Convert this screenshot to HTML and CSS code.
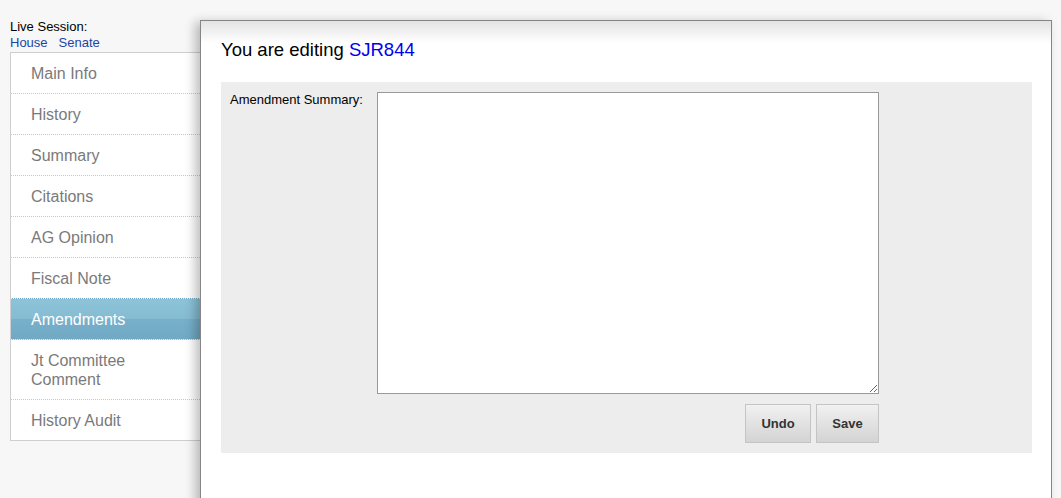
FILE: index.html
```html
<!DOCTYPE html>
<html>
<head>
<meta charset="utf-8">
<link rel="stylesheet" href="styles.css">
</head>
<body>
<div class="layout">
  <aside class="sidebar">
    <div class="session">
      <div>Live Session:</div>
      <div class="session-links"><a href="#">House</a><a href="#">Senate</a></div>
    </div>
    <ul class="nav">
      <li>Main Info</li>
      <li>History</li>
      <li>Summary</li>
      <li>Citations</li>
      <li>AG Opinion</li>
      <li>Fiscal Note</li>
      <li class="active">Amendments</li>
      <li>Jt Committee<br>Comment</li>
      <li class="last">History Audit</li>
    </ul>
  </aside>
  <main class="panel">
    <h1 class="title">You are editing <span class="bill">SJR844</span></h1>
    <form class="editor">
      <label class="field-label" for="summary">Amendment Summary:</label>
      <div class="field">
        <textarea id="summary" class="summary"></textarea>
        <div class="actions">
          <button type="button" class="btn btn-undo">Undo</button>
          <button type="button" class="btn btn-save">Save</button>
        </div>
      </div>
    </form>
  </main>
</div>
</body>
</html>
```
FILE: styles.css
```css
html, body {
  margin: 0;
  padding: 0;
  background: #f7f7f7;
  font-family: "Liberation Sans", Arial, Helvetica, sans-serif;
  overflow: hidden;
  height: 498px;
}

.layout {
  display: flex;
  align-items: flex-start;
}

.sidebar {
  width: 190px;
  padding-left: 10px;
  padding-top: 19px;
  flex: none;
}

.session {
  font-size: 13px;
  line-height: 16px;
  color: #000;
  height: 33px;
}

.session-links {
  display: flex;
  gap: 11px;
}

.session-links a {
  color: #1d44a6;
  text-decoration: none;
}

.nav {
  list-style: none;
  margin: 0;
  padding: 0;
  background: #fff;
  border: 1px solid #cfcfcf;
  border-right: none;
}

.nav li {
  font-size: 16px;
  line-height: 19px;
  padding: 10.5px 20px;
  color: #7a7a7a;
  border-bottom: 1px dotted #c8c8c8;
}

.nav li.last {
  border-bottom: none;
}

.nav li.active {
  color: #fff;
  background: linear-gradient(#8dc3d7, #85bcd2 50%, #78b0ca 50%, #70a9c5);
  border-bottom-color: #e6f1f6;
  margin-top: -1px;
  border-top: 1px dotted #e6f1f6;
}

.panel {
  margin-top: 20px;
  width: 852px;
  height: 520px;
  box-sizing: border-box;
  border: 1px solid #858585;
  background: linear-gradient(#e3e3e3, #fff 22px);
  box-shadow: -5px 2px 10px rgba(0, 0, 0, 0.25);
  padding: 18px 19px 0 20px;
  position: relative;
  z-index: 1;
}

.title {
  margin: 0 0 21px 0;
  font-size: 18.5px;
  line-height: 22px;
  font-weight: normal;
  color: #000;
}

.bill {
  color: #0000ee;
}

.editor {
  background: #ededed;
  padding: 10px 9px 10px 9px;
  display: grid;
  grid-template-columns: 147px 502px;
  align-items: start;
}

.field-label {
  font-size: 13px;
  line-height: 15px;
  color: #000;
}

.summary {
  display: block;
  width: 502px;
  height: 302px;
  box-sizing: border-box;
  border: 1px solid #9a9a9a;
  background: #fff;
  margin: 0;
  resize: both;
}

.actions {
  display: flex;
  justify-content: flex-end;
  gap: 5px;
  margin-top: 10px;
}

.btn {
  height: 39px;
  padding: 0;
  font-family: "Liberation Sans", Arial, Helvetica, sans-serif;
  font-size: 13px;
  font-weight: bold;
  color: #333;
  border: 1px solid #c4c4c4;
  border-radius: 0;
  background: linear-gradient(#f1f1f1, #d3d3d3);
}

.btn-undo {
  width: 66px;
}

.btn-save {
  width: 63px;
}
```
